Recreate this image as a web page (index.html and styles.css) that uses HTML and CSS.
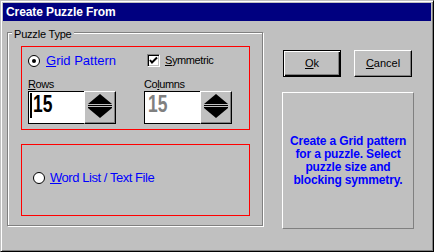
FILE: index.html
```html
<!DOCTYPE html>
<html lang="en">
<head>
    <meta charset="UTF-8">
    <title>Create Puzzle From</title>
    <link rel="stylesheet" href="styles.css">
</head>
<body>
    <div class="window">
        <div class="titlebar">Create Puzzle From</div>
        <div class="main">
            <fieldset class="group">
                <legend>Puzzle Type</legend>

                <div class="option-box grid-box">
                    <div class="opt-row row-choice">
                        <div class="cell">
                            <label class="radio">
                                <svg class="radio-mark" width="12" height="12" viewBox="0 0 12 12">
                                    <circle cx="6" cy="6" r="5.5" fill="#fff" stroke="#000"/>
                                    <circle cx="6" cy="6" r="2" fill="#000"/>
                                </svg>
                                <span class="radio-text"><u>G</u>rid Pattern</span>
                            </label>
                        </div>
                        <div class="cell">
                            <label class="check">
                                <span class="check-box">
                                    <svg width="11" height="11" viewBox="0 0 11 11">
                                        <polyline points="2,5 4,7.5 9,2.5" fill="none" stroke="#000" stroke-width="2"/>
                                    </svg>
                                </span>
                                <span class="small-text"><u>S</u>ymmetric</span>
                            </label>
                        </div>
                    </div>

                    <div class="opt-row row-labels">
                        <div class="cell small-text"><u>R</u>ows</div>
                        <div class="cell small-text">Co<u>l</u>umns</div>
                    </div>

                    <div class="opt-row">
                        <div class="cell">
                            <div class="spin">
                                <div class="spin-edit"><span class="caret"></span><span class="digits">15</span></div>
                                <div class="spin-btn">
                                    <svg width="30" height="31" viewBox="0 0 30 31">
                                        <polygon points="3,12 27,12 15,2" fill="#000"/>
                                        <rect x="3" y="13" width="24" height="1" fill="#000"/>
                                        <rect x="3" y="15" width="24" height="1" fill="#000"/>
                                        <polygon points="3,16 27,16 15,26" fill="#000"/>
                                    </svg>
                                </div>
                            </div>
                        </div>
                        <div class="cell">
                            <div class="spin">
                                <div class="spin-edit disabled"><span class="digits">15</span></div>
                                <div class="spin-btn">
                                    <svg width="30" height="31" viewBox="0 0 30 31">
                                        <polygon points="3,12 27,12 15,2" fill="#000"/>
                                        <rect x="3" y="13" width="24" height="1" fill="#000"/>
                                        <rect x="3" y="15" width="24" height="1" fill="#000"/>
                                        <polygon points="3,16 27,16 15,26" fill="#000"/>
                                    </svg>
                                </div>
                            </div>
                        </div>
                    </div>
                </div>

                <div class="option-box list-box">
                    <label class="radio">
                        <svg class="radio-mark" width="12" height="12" viewBox="0 0 12 12">
                            <circle cx="6" cy="6" r="5.5" fill="#fff" stroke="#000"/>
                        </svg>
                        <span class="radio-text list-text"><u>W</u>ord List / Text File</span>
                    </label>
                </div>
            </fieldset>

            <div class="side">
                <div class="buttons">
                    <button type="button" class="btn btn-default"><u>O</u>k</button>
                    <button type="button" class="btn"><u>C</u>ancel</button>
                </div>
                <div class="info">
                    <p>Create a Grid pattern<br>for a puzzle. Select<br>puzzle size and<br>blocking symmetry.</p>
                </div>
            </div>
        </div>
    </div>
</body>
</html>
```

FILE: styles.css
```css
body {
    margin: 0;
    background: #c0c0c0;
    font-family: "Liberation Sans", Arial, sans-serif;
    font-size: 11px;
    color: #000;
}

.window {
    width: 434px;
    height: 252px;
    box-sizing: border-box;
    border: 1px solid;
    border-color: #c0c0c0 #000 #000 #c0c0c0;
    box-shadow: inset 1px 1px #fff, inset -1px -1px #808080;
    padding: 2px;
    background: #c0c0c0;
}

.titlebar {
    height: 18px;
    line-height: 18px;
    padding-left: 3px;
    background: #000080;
    color: #fff;
    font-weight: bold;
    font-size: 12px;
    letter-spacing: -0.1px;
}

.main {
    display: flex;
    align-items: flex-start;
    padding: 4px 0 0 4px;
}

.group {
    margin: 0;
    padding: 0 4px 9px;
    width: 256px;
    min-width: 0;
    box-sizing: border-box;
    border: 1px solid #808080;
    box-shadow: inset 1px 1px #fff, 1px 1px #fff;
}

.group legend {
    margin: 0;
    padding: 4px 2px 0;
    line-height: 11px;
    letter-spacing: -0.2px;
    background: #c0c0c0;
}

.option-box {
    border: 1px solid #f00;
    margin-left: 9px;
    width: 229px;
    box-sizing: border-box;
}

.grid-box {
    height: 84px;
    margin-top: 6px;
    padding: 7px 0 0 6px;
}

.list-box {
    height: 72px;
    margin-top: 14px;
    padding: 26px 0 0 11px;
}

.opt-row {
    display: flex;
}

.cell {
    flex: none;
    width: 116px;
}

.row-choice {
    height: 13px;
}

.row-labels {
    margin-top: 11px;
    height: 13px;
    line-height: 13px;
}

.small-text {
    font-size: 11px;
    letter-spacing: -0.4px;
}

.radio,
.check {
    display: flex;
    align-items: center;
    height: 13px;
    line-height: 13px;
}

.radio-mark {
    margin-right: 6px;
    flex: none;
}

.radio-text {
    color: #00f;
    font-size: 13px;
}

.list-text {
    letter-spacing: -0.45px;
}

.list-box .radio-mark {
    margin-right: 5px;
}

.check-box {
    width: 13px;
    height: 13px;
    box-sizing: border-box;
    margin: 0 5px 0 3px;
    background: #fff;
    border: 1px solid;
    border-color: #808080 #fff #fff #808080;
    box-shadow: inset 1px 1px #000, inset -1px -1px #c0c0c0;
    display: flex;
    align-items: center;
    justify-content: center;
}

.spin {
    display: flex;
    height: 33px;
}

.spin-edit {
    width: 56px;
    box-sizing: border-box;
    border: 1px solid #000;
    border-right: none;
    background: #fff;
    display: flex;
    align-items: flex-start;
    padding-left: 1px;
    font-weight: bold;
    font-size: 23px;
    line-height: 24px;
}

.spin-edit.disabled {
    color: #808080;
    padding-left: 3px;
}

.digits {
    display: inline-block;
    transform: scaleX(0.76);
    transform-origin: left center;
}

.caret {
    width: 2px;
    height: 25px;
    margin: 1px 1px 0 0;
    background: #000;
}

.spin-btn {
    width: 32px;
    box-sizing: border-box;
    border: 1px solid;
    border-color: #fff #000 #000 #fff;
    box-shadow: inset -1px -1px #808080;
    background: #c0c0c0;
}

.spin-btn svg {
    display: block;
}

.side {
    margin: 25px 0 0 19px;
    width: 132px;
}

.buttons {
    display: flex;
    gap: 13px;
    padding-left: 1px;
}

.btn {
    width: 58px;
    height: 27px;
    padding: 0;
    box-sizing: border-box;
    background: #c0c0c0;
    border: 1px solid;
    border-color: #fff #000 #000 #fff;
    box-shadow: inset -1px -1px #808080;
    font-family: "Liberation Sans", Arial, sans-serif;
    font-size: 11px;
    line-height: 13px;
    color: #000;
}

.btn-default {
    border-color: #000;
    box-shadow: inset 1px 1px #fff, inset -1px -1px #000, inset -2px -2px #808080;
}

.info {
    margin-top: 15px;
    height: 137px;
    box-sizing: border-box;
    border: 1px solid;
    border-color: #fff #808080 #808080 #fff;
    display: flex;
    align-items: center;
    justify-content: center;
    text-align: center;
    color: #00f;
    font-weight: bold;
    font-size: 12px;
    line-height: 13px;
    letter-spacing: -0.15px;
}

.info p {
    margin: 0;
}
```
